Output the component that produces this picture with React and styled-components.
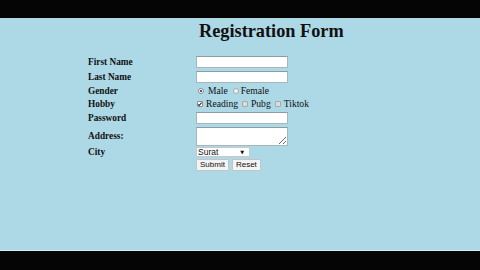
import React from "react";
import styled, { createGlobalStyle } from "styled-components";

const GlobalStyle = createGlobalStyle`
  html, body {
    margin: 0;
    padding: 0;
    background: #050505;
  }
  body {
    font-family: "Liberation Serif", "Times New Roman", serif;
  }
`;

// Black letterbox bars above and below the page
const Bar = styled.div`
  height: ${(p) => p.h}px;
  background: #050505;
`;

const Page = styled.main`
  height: 232px;
  background: #add8e6;
  border-bottom: 1px solid #d8ecf2;
  color: #111;
`;

const Title = styled.h1`
  margin: 0 0 15px 199px;
  padding-top: 4px;
  font-size: 18.3px;
  line-height: 18px;
  font-weight: bold;
`;

const Form = styled.form`
  display: grid;
  grid-template-columns: 108px 1fr;
  grid-template-rows: 14px 15px 14px 11px 17px 20px 11px 16px;
  align-items: center;
  margin-left: 88px;
`;

const Label = styled.label`
  font-size: 9.3px;
  font-weight: bold;
  line-height: 10px;
`;

const Field = styled.div`
  display: flex;
  align-items: center;
  height: 100%;
`;

const TextInput = styled.input`
  box-sizing: border-box;
  width: 92px;
  height: 12px;
  margin: 0;
  padding: 0 2px;
  border: 1px solid #a6b6bc;
  border-top-color: #8d9ca2;
  background: #fff;
  font-size: 8px;
`;

const TextArea = styled.textarea`
  box-sizing: border-box;
  width: 92px;
  height: 19px;
  margin: 0;
  padding: 0 2px;
  border: 1px solid #a6b6bc;
  border-top-color: #8d9ca2;
  background: #fff;
  font-size: 8px;
  resize: both;
`;

// Small hand-styled radio / checkbox to match the thumbnail look
const Choice = styled.input`
  appearance: none;
  box-sizing: border-box;
  position: relative;
  flex: none;
  width: 6px;
  height: 6px;
  margin: 0 ${(p) => p.gapRight ?? 3}px 0 ${(p) => p.gapLeft ?? 1}px;
  border: 1px solid #a9a9a9;
  border-radius: ${(p) => (p.type === "radio" ? "50%" : "1px")};
  background: ${(p) => (p.type === "radio" ? "#f2f2f2" : "#dcdcdc")};

  &:checked {
    background: #fff;
    border-color: #8a8a8a;
  }
  &[type="radio"]:checked::after {
    content: "";
    position: absolute;
    left: 1px;
    top: 1px;
    width: 2px;
    height: 2px;
    border-radius: 50%;
    background: #222;
  }
  &[type="checkbox"]:checked::after {
    content: "";
    position: absolute;
    left: 1.2px;
    top: 0;
    width: 1.2px;
    height: 2.6px;
    border: solid #222;
    border-width: 0 1px 1px 0;
    transform: rotate(40deg);
  }
`;

const ChoiceText = styled.span`
  font-size: 9.6px;
  line-height: 10px;
  margin-right: ${(p) => p.space ?? 4}px;
`;

const SelectWrap = styled.span`
  position: relative;
  display: inline-flex;

  &::after {
    content: "▼";
    position: absolute;
    right: 6px;
    top: 2px;
    font-family: "DejaVu Sans", sans-serif;
    font-size: 5px;
    line-height: 6px;
    color: #111;
    pointer-events: none;
  }
`;

const Select = styled.select`
  appearance: none;
  box-sizing: border-box;
  width: 54px;
  height: 10px;
  margin: 0;
  padding: 0 0 0 1px;
  border: 1px solid #c8c8c8;
  border-radius: 0;
  background: #fff;
  font-family: "Liberation Sans", Arial, sans-serif;
  font-size: 8.5px;
  line-height: 8px;
  color: #111;
`;

const Button = styled.button`
  box-sizing: border-box;
  height: 12px;
  margin: 0 ${(p) => p.space || 0}px 0 0;
  padding: 0 3px;
  border: 1px solid #c4c4c4;
  border-radius: 1px;
  background: #f4f4f4;
  font-family: "Liberation Sans", Arial, sans-serif;
  font-size: 8px;
  line-height: 10px;
  color: #111;
`;

export default function App() {
  return (
    <>
      <GlobalStyle />
      <Bar h={18} />
      <Page>
        <Title>Registration Form</Title>
        <Form onSubmit={(e) => e.preventDefault()}>
          <Label>First Name</Label>
          <Field>
            <TextInput type="text" />
          </Field>

          <Label>Last Name</Label>
          <Field>
            <TextInput type="text" />
          </Field>

          <Label>Gender</Label>
          <Field>
            <Choice type="radio" name="gender" defaultChecked gapLeft={2} gapRight={4} />
            <ChoiceText space={5}>Male</ChoiceText>
            <Choice type="radio" name="gender" gapLeft={0} gapRight={2} />
            <ChoiceText>Female</ChoiceText>
          </Field>

          <Label>Hobby</Label>
          <Field>
            <Choice type="checkbox" defaultChecked gapLeft={1} gapRight={3} />
            <ChoiceText>Reading</ChoiceText>
            <Choice type="checkbox" gapLeft={0} gapRight={3} />
            <ChoiceText>Pubg</ChoiceText>
            <Choice type="checkbox" gapLeft={0} gapRight={3} />
            <ChoiceText>Tiktok</ChoiceText>
          </Field>

          <Label>Password</Label>
          <Field>
            <TextInput type="password" />
          </Field>

          <Label>Address:</Label>
          <Field>
            <TextArea />
          </Field>

          <Label>City</Label>
          <Field>
            <SelectWrap>
              <Select defaultValue="Surat">
                <option>Surat</option>
                <option>Ahmedabad</option>
                <option>Vadodara</option>
              </Select>
            </SelectWrap>
          </Field>

          <span />
          <Field>
            <Button type="submit" space={3}>Submit</Button>
            <Button type="reset">Reset</Button>
          </Field>
        </Form>
      </Page>
      <Bar h={19} />
    </>
  );
}
